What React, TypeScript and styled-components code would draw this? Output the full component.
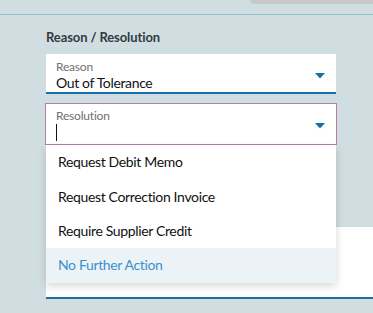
import styled, { createGlobalStyle } from "styled-components";

const GlobalStyle = createGlobalStyle`
  html, body {
    margin: 0;
    padding: 0;
    background: #d0dde1;
  }
  body {
    font-family: Lato, "Noto Sans", "Liberation Sans", sans-serif;
    width: 373px;
    height: 313px;
    overflow: hidden;
  }
`;

const Page = styled.div`
  width: 373px;
  height: 313px;
  background: #d0dde1;
  display: flex;
  flex-direction: column;
`;

const TopStrip = styled.div`
  height: 14px;
  border-bottom: 1px solid #8ec2d2;
  display: flex;
  justify-content: flex-end;
`;

const Tab = styled.div`
  width: 123px;
  height: 4px;
  background: #c8c8c8;
  border-bottom-left-radius: 4px;
`;

const Section = styled.div`
  padding: 14px 0 0 46px;
  display: flex;
  flex-direction: column;
`;

const Title = styled.div`
  font-size: 13px;
  font-weight: 700;
  color: #333a3f;
  height: 25px;
  letter-spacing: -0.1px;
`;

const Field = styled.div<{ focused?: boolean }>`
  width: 290px;
  height: 40px;
  box-sizing: border-box;
  background: #fff;
  position: relative;
  padding: 6px 0 0 10px;
  border-bottom: 2px solid #1a6ea8;
  ${({ focused }) =>
    focused &&
    `
    margin-left: -1px;
    width: 292px;
    height: 42px;
    border: 1px solid #b67da8;
    padding: 5px 0 0 10px;
  `}
`;

const Label = styled.div`
  font-size: 12px;
  color: #6f6f6f;
  line-height: 14px;
  letter-spacing: -0.2px;
`;

const Value = styled.div`
  font-size: 14px;
  color: #111;
  line-height: 18px;
  height: 18px;
  letter-spacing: -0.35px;
`;

const Caret = styled.span`
  display: inline-block;
  width: 1px;
  height: 17px;
  background: #111;
  margin-top: 1px;
`;

const Arrow = styled.svg`
  position: absolute;
  right: 11px;
  top: 19px;
`;

const Gap = styled.div`
  height: 9px;
`;

const Below = styled.div`
  position: relative;
`;

const Menu = styled.ul`
  position: absolute;
  top: 0;
  left: 0;
  z-index: 2;
  width: 290px;
  margin: 0;
  padding: 0;
  list-style: none;
  background: #fff;
  box-shadow: 0 3px 8px rgba(0, 0, 0, 0.16);
`;

const Item = styled.li<{ active?: boolean }>`
  height: 34.4px;
  display: flex;
  align-items: center;
  padding-left: 12px;
  padding-bottom: 1px;
  box-sizing: border-box;
  font-size: 14px;
  letter-spacing: -0.35px;
  color: ${({ active }) => (active ? "#3a90d0" : "#111")};
  background: ${({ active }) => (active ? "#ecf3f6" : "#fff")};
`;

const Backdrop = styled.div`
  margin-top: 82px;
  height: 70px;
  background: #fff;
  border-bottom: 2px solid #1a6ea8;
`;

function DownArrow() {
  return (
    <Arrow width="10" height="6" viewBox="0 0 10 6">
      <path d="M0 0 H10 L5 5.5 Z" fill="#1a6ea8" />
    </Arrow>
  );
}

const options = [
  "Request Debit Memo",
  "Request Correction Invoice",
  "Require Supplier Credit",
  "No Further Action",
];

export default function App() {
  return (
    <Page>
      <GlobalStyle />
      <TopStrip>
        <Tab />
      </TopStrip>
      <Section>
        <Title>Reason / Resolution</Title>
        <Field>
          <Label>Reason</Label>
          <Value>Out of Tolerance</Value>
          <DownArrow />
        </Field>
        <Gap />
        <Field focused>
          <Label>Resolution</Label>
          <Value>
            <Caret />
          </Value>
          <DownArrow />
        </Field>
        <Below>
          <Menu>
            {options.map((o, i) => (
              <Item key={o} active={i === options.length - 1}>
                {o}
              </Item>
            ))}
          </Menu>
          <Backdrop />
        </Below>
      </Section>
    </Page>
  );
}
